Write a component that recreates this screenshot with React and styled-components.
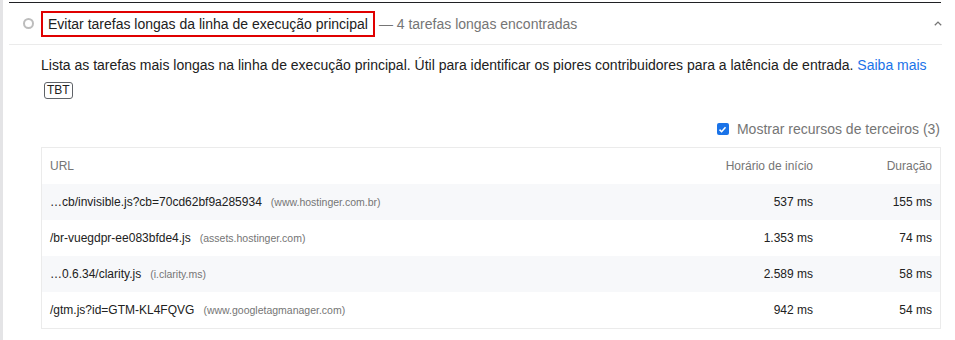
import React from 'react'
import styled, { createGlobalStyle } from 'styled-components'

const GlobalStyle = createGlobalStyle`
  body {
    margin: 0;
    background: #fff;
    font-family: "Liberation Sans", Arial, sans-serif;
    color: #212121;
  }
`

const rows = [
  { url: '…cb/invisible.js?cb=70cd62bf9a285934', host: 'www.hostinger.com.br', start: '537 ms', dur: '155 ms' },
  { url: '/br-vuegdpr-ee083bfde4.js', host: 'assets.hostinger.com', start: '1.353 ms', dur: '74 ms' },
  { url: '…0.6.34/clarity.js', host: 'i.clarity.ms', start: '2.589 ms', dur: '58 ms' },
  { url: '/gtm.js?id=GTM-KL4FQVG', host: 'www.googletagmanager.com', start: '942 ms', dur: '54 ms' },
]

function App() {
  return (
    <>
      <GlobalStyle />
      <Page>
        <Audit>
          <Header>
            <Circle />
            <Title>Evitar tarefas longas da linha de execução principal</Title>
            <Display>— 4 tarefas longas encontradas</Display>
            <Chevron viewBox="0 0 8 5" width="8" height="5">
              <path d="M0.8 4.3 L4 1.1 L7.2 4.3" fill="none" stroke="#757575" strokeWidth="1.3" />
            </Chevron>
          </Header>
          <Body>
            <Description>
              Lista as tarefas mais longas na linha de execução principal. Útil para identificar os piores contribuidores para a latência de entrada. <Link href="#">Saiba mais</Link>
            </Description>
            <Badges>
              <Badge>TBT</Badge>
            </Badges>
            <Filter>
              <Check>
                <svg viewBox="0 0 12 12" width="9" height="9">
                  <path d="M2 6.2 L4.8 9 L10 3" fill="none" stroke="#fff" strokeWidth="2" />
                </svg>
              </Check>
              Mostrar recursos de terceiros (3)
            </Filter>
            <Table>
              <thead>
                <tr>
                  <Th>URL</Th>
                  <Th align="right">Horário de início</Th>
                  <Th align="right" last>Duração</Th>
                </tr>
              </thead>
              <tbody>
                {rows.map((r, i) => (
                  <Tr key={i} shaded={i % 2 === 0}>
                    <Td>
                      {r.url}
                      <Host>({r.host})</Host>
                    </Td>
                    <Td align="right">{r.start}</Td>
                    <Td align="right" last>{r.dur}</Td>
                  </Tr>
                ))}
              </tbody>
            </Table>
          </Body>
        </Audit>
      </Page>
    </>
  )
}

const Page = styled.div`
  border-left: 3px solid #e4e4e6;
  height: 340px;
  box-sizing: border-box;
  padding: 2px 14px 0 6px;
`

const Audit = styled.div`
  border-top: 1px solid #202124;
`

const Header = styled.div`
  display: flex;
  align-items: center;
  height: 41px;
  padding: 0 0 0 14px;
  margin-right: -1px;
  border-bottom: 1px solid #ebebeb;
  font-size: 14px;
`

const Circle = styled.span`
  width: 7px;
  height: 7px;
  border: 2px solid #bdbdbd;
  border-radius: 50%;
  margin-right: 7px;
  margin-top: -1px;
`

const Title = styled.span`
  border: 2px solid #e00000;
  padding: 3px 5px 3px 5px;
  color: #212121;
`

const Display = styled.span`
  margin-left: 4px;
  color: #757575;
`

const Chevron = styled.svg`
  margin-left: auto;
  margin-top: -1px;
`

const Body = styled.div`
  padding: 10px 0 0 32px;
`

const Description = styled.div`
  font-size: 14px;
  line-height: 20px;
  color: #212121;
`

const Link = styled.a`
  color: #1a73e8;
  text-decoration: none;
`

const Badges = styled.div`
  display: flex;
  margin-top: 7px;
  padding-left: 3px;
`

const Badge = styled.span`
  padding: 0 2px;
  border: 1px solid #5f6368;
  border-radius: 3px;
  font-size: 12px;
  line-height: 15px;
  color: #212121;
`

const Filter = styled.label`
  display: flex;
  align-items: center;
  justify-content: flex-end;
  margin-top: 22px;
  font-size: 14px;
  color: #757575;
  padding-right: 1px;
`

const Check = styled.span`
  display: inline-flex;
  align-items: center;
  justify-content: center;
  width: 12px;
  height: 12px;
  border-radius: 2px;
  background: #1a73e8;
  margin-right: 8px;
`

const Table = styled.table`
  width: 100%;
  margin-top: 10px;
  border-collapse: collapse;
  border: 1px solid #ebebeb;
  font-size: 12px;
`

const Th = styled.th`
  height: 36px;
  padding: 0 ${p => (p.last ? '8px' : '0')} 0 8px;
  width: ${p => (p.last ? '111px' : 'auto')};
  text-align: ${p => p.align || 'left'};
  font-weight: normal;
  color: #757575;
`

const Tr = styled.tr`
  background: ${p => (p.shaded ? '#f7f8fa' : '#fff')};
`

const Td = styled.td`
  height: 36px;
  padding: 0 ${p => (p.last ? '8px' : '0')} 0 8px;
  text-align: ${p => p.align || 'left'};
  color: #212121;
  white-space: nowrap;
`

const Host = styled.span`
  margin-left: 9px;
  font-size: 10.5px;
  color: #757575;
`

export default App
